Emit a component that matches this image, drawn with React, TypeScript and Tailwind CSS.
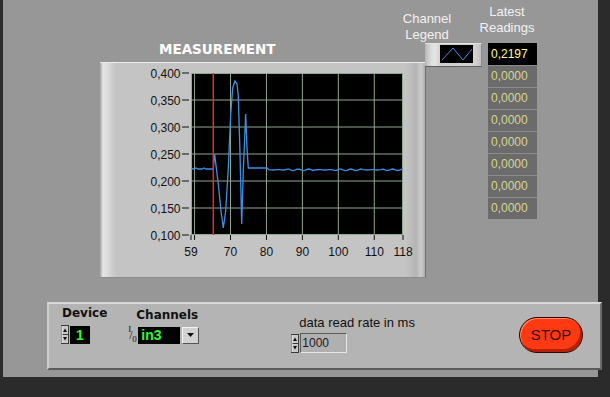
import React from 'react';

// plot geometry inside the graph frame (frame is 326 x 216)
const OX = 91;
const OY = 10;
const PW = 212;
const PH = 162;

const xPx = (v: number) => OX + ((v - 59) * PW) / 59;
const yPx = (v: number) => OY + ((0.4 - v) * PH) / 0.3;

const xLabels = [59, 70, 80, 90, 100, 110, 118];
const xGrid = [60, 70, 80, 90, 100, 110];
const yLabels = [0.4, 0.35, 0.3, 0.25, 0.2, 0.15, 0.1];

// trace, in plot pixels (dx, dy)
const head: [number, number][] = [
  [0, 95.5], [3, 96], [5, 95], [7, 96], [11, 96], [13, 95], [15, 96], [22.3, 96],
  [23.6, 81], [27.3, 111], [30, 138], [32.3, 155], [34.7, 138], [37.3, 95],
  [39.7, 41], [41.7, 15], [44, 8], [46, 11], [47.3, 23], [49, 81], [50.7, 151],
  [52.3, 98], [54.7, 41], [56, 75], [57.3, 95], [76, 95],
];

function tracePoints() {
  const pts = [...head];
  for (let x = 78; x <= 212; x += 2) {
    const on = Math.sin(x * 0.13) > -0.2 ? 1 : 0.25;
    pts.push([x, 96.8 - 0.8 * Math.sin(x * 0.6) * on]);
  }
  return pts.map(([x, y]) => `${OX + x},${OY + y}`).join(' ');
}

const readings = ['0,2197', '0,0000', '0,0000', '0,0000', '0,0000', '0,0000', '0,0000', '0,0000'];

function Chart() {
  const grid = '#8fa98f';
  return (
    <svg width={326} height={216} className="block">
      <rect x={OX} y={OY} width={PW} height={PH} fill="#000" />
      {xGrid.map((v) => (
        <line key={v} x1={xPx(v)} x2={xPx(v)} y1={OY} y2={OY + PH} stroke={grid} strokeWidth={1} />
      ))}
      {yLabels.slice(1, -1).map((v) => (
        <line key={v} x1={OX} x2={OX + PW} y1={yPx(v)} y2={yPx(v)} stroke={grid} strokeWidth={1} />
      ))}
      <rect x={OX + 0.5} y={OY + 0.5} width={PW - 1} height={PH - 1} fill="none" stroke={grid} strokeWidth={1} />
      <polyline points={tracePoints()} fill="none" stroke="#3d8fe6" strokeWidth={1.3} />
      <line x1={OX + 22.3} x2={OX + 22.3} y1={OY} y2={OY + PH} stroke="#e2301f" strokeWidth={1.5} />
      {yLabels.map((v) => (
        <g key={v}>
          <line x1={82} x2={89} y1={yPx(v)} y2={yPx(v)} stroke="#111" strokeWidth={1} />
          <text x={80.5} y={yPx(v) + 4.5} textAnchor="end" fontSize={12} fill="#111" fontFamily="'Liberation Sans', Arial, sans-serif">
            {v.toFixed(3).replace('.', ',')}
          </text>
        </g>
      ))}
      {[59, 60, ...xGrid.slice(1), 118].map((v) => (
        <line key={v} x1={xPx(v)} x2={xPx(v)} y1={OY + PH} y2={OY + PH + 5} stroke="#111" strokeWidth={1} />
      ))}
      {xLabels.map((v) => (
        <text key={v} x={xPx(v)} y={193} textAnchor="middle" fontSize={12} fill="#111" fontFamily="'Liberation Sans', Arial, sans-serif">
          {v}
        </text>
      ))}
    </svg>
  );
}

function Spinner() {
  return (
    <svg width={8} height={19} className="block shrink-0">
      <rect x={0.5} y={0.5} width={7} height={18} fill="#c9c9c9" stroke="#3a3a3a" />
      <line x1={1} x2={7} y1={9.5} y2={9.5} stroke="#3a3a3a" />
      <line x1={1} x2={1} y1={1} y2={18} stroke="#f0f0f0" />
      <polygon points="2,7 4,3.5 6,7" fill="#111" />
      <polygon points="2,12 4,15.5 6,12" fill="#111" />
    </svg>
  );
}

export default function App() {
  return (
    <div className="w-[610px] h-[397px] bg-[#2b2b2b] pl-[3px] overflow-hidden font-['Liberation_Sans',Arial,sans-serif]">
      <div className="w-[595px] h-[377px] bg-[#979797] flex flex-col">
        {/* upper area: graph, legend, readings */}
        <div className="h-[302px] flex items-start">
          <div className="ml-[97px] w-[326px] flex flex-col">
            <div className="pt-[41px] pl-[59px] leading-[16px] text-[13.5px] font-bold text-white font-['DejaVu_Sans',sans-serif]">
              MEASUREMENT
            </div>
            <div className="mt-[5px] w-[326px] h-[216px] border-t border-t-[#ececec] border-r border-r-[#6e6e6e] border-b border-b-[#8a8a8a] bg-[linear-gradient(90deg,#a4a4a4_0px,#e6e6e6_3px,#dadada_8px,#cacaca_13px,#c4c4c4_17px,#c4c4c4_306px,#b4b4b4_316px,#cbcbcb_321px,#a8a8a8_326px)] overflow-hidden">
              <Chart />
            </div>
          </div>

          <div className="-ml-[1px] w-[57px] flex flex-col">
            <div className="pt-[11px] -ml-[26px] w-[56px] text-center text-[13px] leading-[16px] text-[#f2f2f2] whitespace-nowrap">
              <div>Channel</div>
              <div>Legend</div>
            </div>
            <div className="w-[57px] h-[24px] flex items-start border-t border-t-[#e4e4e4] border-b border-b-[#5e5e5e] border-r border-r-[#8a8a8a] bg-[linear-gradient(90deg,#b6b6b6_0px,#dcdcdc_6px,#e4e4e4_10px,#cfcfcf_16px,#d2d2d2_50px,#bdbdbd_57px)]">
              <div className="ml-[15px] mt-[1px] w-[33px] h-[18px] bg-black">
                <svg width={33} height={18} className="block">
                  <polyline points="2,15 13,3 23,15 32,4" fill="none" stroke="#3d8fe6" strokeWidth={1} />
                </svg>
              </div>
            </div>
          </div>

          <div className="ml-[6px] w-[49px] flex flex-col">
            <div className="pt-[4px] -ml-[11px] w-[60px] h-[43px] text-center text-[13px] leading-[16px] text-[#f2f2f2] whitespace-nowrap">
              <div>Latest</div>
              <div>Readings</div>
            </div>
            <div className="flex flex-col">
              {readings.map((r, i) => (
                <div
                  key={i}
                  className={
                    i === 0
                      ? 'h-[22px] pl-[3px] leading-[22px] text-[12px] bg-black text-[#ffff8a]'
                      : 'h-[22px] pl-[3px] leading-[21px] text-[12px] bg-[#6b6b6b] text-[#d6d68e] border-t border-t-[#8c8c8c]'
                  }
                >
                  {r}
                </div>
              ))}
            </div>
          </div>
        </div>

        {/* control panel */}
        <div className="ml-[44px] w-[555px] h-[68px] shrink-0 bg-[#b4b4b4] border-t-2 border-t-[#d8d8d8] border-l-2 border-l-[#cecece] border-r-2 border-r-[#6c6c6c] border-b-2 border-b-[#5c5c5c] flex items-start pl-[12px]">
          <div className="pt-[2px] flex flex-col">
            <div className="ml-[1px] text-[12px] leading-[14px] font-bold text-[#111] font-['DejaVu_Sans',sans-serif]">Device</div>
            <div className="mt-[5px] flex items-center gap-[1px]">
              <Spinner />
              <div className="w-[20px] h-[18px] bg-black pl-[6px] text-[14px] leading-[18px] font-bold text-[#28ff28]">1</div>
            </div>
          </div>

          <div className="ml-[20px] pt-[4px] flex flex-col">
            <div className="ml-[9px] text-[12px] leading-[14px] font-bold text-[#111] font-['DejaVu_Sans',sans-serif]">Channels</div>
            <div className="mt-[4px] flex items-center">
              <div className="relative w-[11px] h-[18px] text-[#111] font-['Liberation_Serif',serif]">
                <span className="absolute left-[1px] top-[-2px] text-[9px] leading-[10px]">I</span>
                <span className="absolute left-[2px] top-[2px] text-[12px] leading-[14px]">/</span>
                <span className="absolute left-[5px] top-[8px] text-[9px] leading-[10px]">0</span>
              </div>
              <div className="w-[42px] h-[17px] bg-black pl-[3px] text-[14px] leading-[17px] font-bold text-[#28ff28]">in3</div>
              <div className="ml-[2px] w-[17px] h-[17px] bg-[#d2d2d2] border border-t-[#f2f2f2] border-l-[#f2f2f2] border-r-[#555] border-b-[#555] flex items-center justify-center">
                <svg width={7} height={4} className="block">
                  <polygon points="0,0 7,0 3.5,4" fill="#111" />
                </svg>
              </div>
            </div>
          </div>

          <div className="ml-[92px] pt-[11px] flex flex-col">
            <div className="ml-[8px] text-[13px] leading-[15px] text-[#111] whitespace-nowrap">data read rate in ms</div>
            <div className="mt-[3px] flex items-center gap-[1px]">
              <Spinner />
              <div className="w-[47px] h-[20px] bg-[#b0b0b0] border border-t-[#5a5a5a] border-l-[#5a5a5a] border-r-[#e6e6e6] border-b-[#e6e6e6] pl-[1px] text-[12px] leading-[18px] text-[#1a1a1a]">
                1000
              </div>
            </div>
          </div>

          <div className="ml-[104px] pt-[13px]">
            <div className="w-[64px] h-[36px] rounded-full bg-[#ff3a12] border border-[#2a0800] shadow-[inset_-2px_-3px_0_#b82008,inset_1px_1px_0_#ff8a6a] flex items-center justify-center text-[15px] text-[#3a0800]">
              STOP
            </div>
          </div>
        </div>
      </div>
    </div>
  );
}
